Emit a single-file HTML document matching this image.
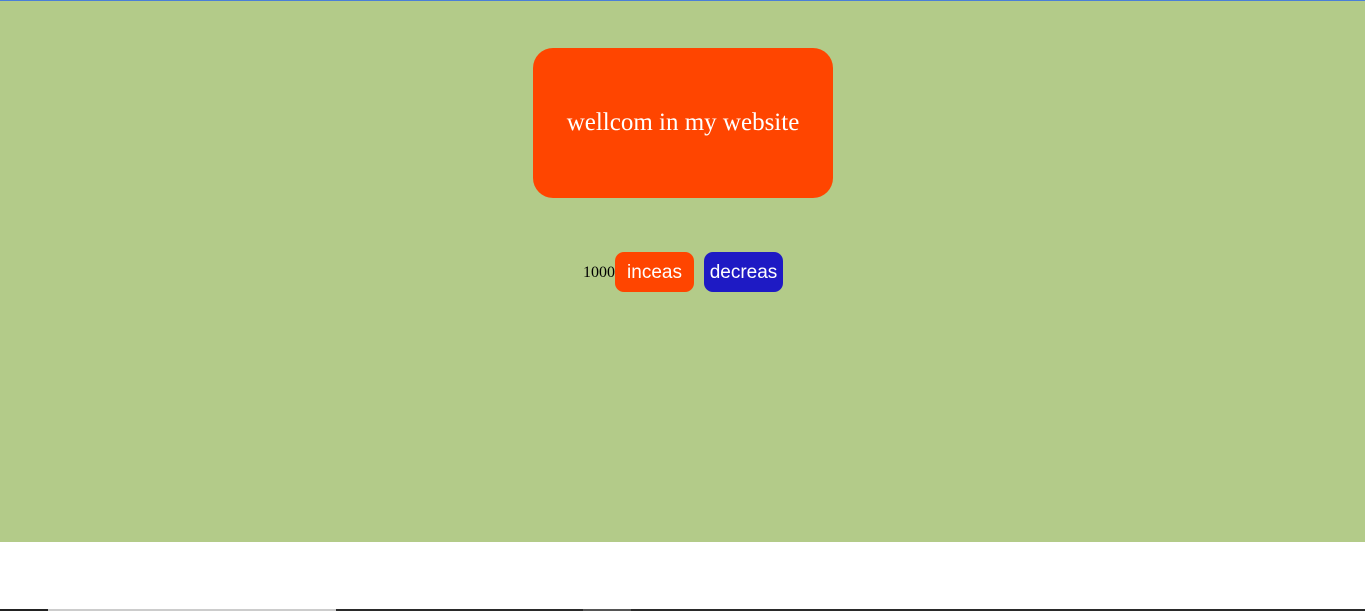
<!DOCTYPE html>
<html><head><style>
html,body{margin:0;padding:0;width:1365px;height:611px;overflow:hidden;background:#fff;}
.top{position:absolute;left:0;top:0;width:1365px;height:1px;background:#4a7fd8;}
.bg{position:absolute;left:0;top:1px;width:1365px;height:541px;background:#b3cb89;}
.box{position:absolute;left:533px;top:48px;width:300px;height:150px;background:#ff4500;border-radius:20px;color:#fff;font-family:"Liberation Serif",serif;font-size:25px;text-align:center;line-height:150px;}
.num{position:absolute;left:583px;top:264px;font-family:"Liberation Serif",serif;font-size:16px;color:#000;}
.btn{position:absolute;top:252px;width:79px;height:40px;border-radius:9px;color:#fff;font-family:"Liberation Sans",sans-serif;font-size:19px;text-align:center;line-height:41px;}
.b1{left:615px;background:#ff4500;}
.b2{left:704px;background:#1e1ac4;}
.bar{position:absolute;top:609px;height:2px;}
</style></head><body>
<div class="top"></div>
<div class="bg"></div>
<div class="box">wellcom in my website</div>
<div class="num">1000</div>
<div class="btn b1">inceas</div>
<div class="btn b2">decreas</div>
<div class="bar" style="left:0;width:48px;background:#222"></div>
<div class="bar" style="left:48px;width:288px;background:#ccc"></div>
<div class="bar" style="left:336px;width:247px;background:#2a2a2a"></div>
<div class="bar" style="left:583px;width:48px;background:#555"></div>
<div class="bar" style="left:631px;width:734px;background:#2a2a2a"></div>
</body></html>
